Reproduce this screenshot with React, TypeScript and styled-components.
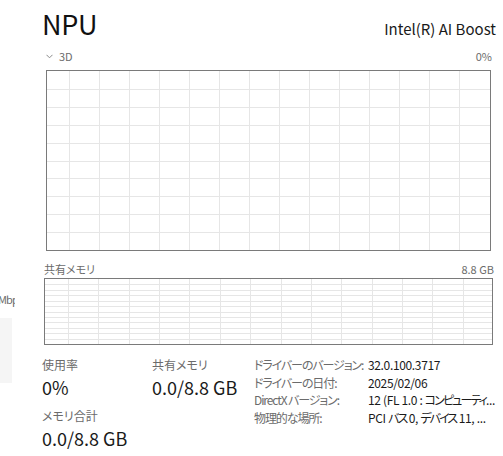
import styled, { createGlobalStyle } from "styled-components";

const GlobalStyle = createGlobalStyle`
  html, body {
    margin: 0;
    padding: 0;
    background: #ffffff;
  }
  body {
    font-family: "Noto Sans CJK JP", "Noto Sans", sans-serif;
    font-feature-settings: "palt";
    color: #1a1a1a;
  }
`;

type GridProps = {
  width: number;
  height: number;
  rows: number;
  colStart: number;
  colStep: number;
};

const GridLines = ({ width, height, rows, colStart, colStep }: GridProps) => {
  const cols: number[] = [];
  for (let x = colStart; x < width - 1; x += colStep) cols.push(Math.round(x) + 0.5);
  const rowLines: number[] = [];
  for (let i = 1; i < rows; i++) rowLines.push(Math.round((height / rows) * i) + 0.5);
  return (
    <svg width={width} height={height} style={{ display: "block" }}>
      {rowLines.map((y) => (
        <line key={"r" + y} x1={0} x2={width} y1={y} y2={y} stroke="#e6e6e6" strokeWidth={1} />
      ))}
      {cols.map((x) => (
        <line key={"c" + x} x1={x} x2={x} y1={0} y2={height} stroke="#e6e6e6" strokeWidth={1} />
      ))}
    </svg>
  );
};

export default function App() {
  return (
    <>
      <GlobalStyle />
      <Page>
        <Sidebar>
          <SidebarText>Mbps</SidebarText>
          <SidebarCard />
        </Sidebar>
        <Panel>
          <Header>
            <Title>NPU</Title>
            <Device>Intel(R) AI Boost</Device>
          </Header>

          <ChartHeader $inset={4} $top={7} $gap={7}>
            <ChartName>
              <svg width="7" height="5" viewBox="0 0 7 5">
                <path d="M0.5 0.8 L3.5 3.8 L6.5 0.8" fill="none" stroke="#8a8a8a" strokeWidth="1" />
              </svg>
              3D
            </ChartName>
            <ChartScale>0%</ChartScale>
          </ChartHeader>
          <Chart $inset={4} $height={181}>
            <GridLines width={443} height={179} rows={10} colStart={22} colStep={30} />
          </Chart>

          <ChartHeader $inset={2} $top={11} $gap={2}>
            <ChartName>共有メモリ</ChartName>
            <ChartScale>8.8 GB</ChartScale>
          </ChartHeader>
          <Chart $inset={2} $height={67}>
            <GridLines width={447} height={65} rows={12} colStart={23} colStep={30.36} />
          </Chart>

          <Stats>
            <StatGrid>
              <Stat>
                <StatLabel>使用率</StatLabel>
                <StatValue>0%</StatValue>
              </Stat>
              <Stat>
                <StatLabel>共有メモリ</StatLabel>
                <StatValue>0.0/8.8 GB</StatValue>
              </Stat>
              <Stat>
                <StatLabel>メモリ合計</StatLabel>
                <StatValue>0.0/8.8 GB</StatValue>
              </Stat>
            </StatGrid>
            <Details>
              <DetailLabel>ドライバーのバージョン:</DetailLabel>
              <DetailValue>32.0.100.3717</DetailValue>
              <DetailLabel>ドライバーの日付:</DetailLabel>
              <DetailValue>2025/02/06</DetailValue>
              <DetailLabel>DirectX バージョン:</DetailLabel>
              <DetailValue>
                12 (FL 1.0 : <Kana>コンピューティ</Kana>...
              </DetailValue>
              <DetailLabel>物理的な場所:</DetailLabel>
              <DetailValue>
                PCI <Kana>バス</Kana> 0, <Kana>デバイス</Kana> 11, ...
              </DetailValue>
            </Details>
          </Stats>
        </Panel>
      </Page>
    </>
  );
}

const Page = styled.div`
  display: flex;
  width: 503px;
  height: 456px;
  overflow: hidden;
`;

const Sidebar = styled.div`
  width: 15px;
  flex-shrink: 0;
  overflow: hidden;
  display: flex;
  flex-direction: column;
`;

const SidebarText = styled.div`
  margin: 291px 0 0 -2px;
  font-size: 11px;
  line-height: 16px;
  letter-spacing: -0.9px;
  color: #6b6b6b;
  white-space: nowrap;
`;

const SidebarCard = styled.div`
  margin-top: 11px;
  width: 12px;
  height: 65px;
  background: #f5f5f5;
`;

const Panel = styled.div`
  flex: 1;
  display: flex;
  flex-direction: column;
  padding: 6px 9px 0 27px;
`;

const Header = styled.div`
  display: flex;
  justify-content: space-between;
  align-items: baseline;
`;

const Title = styled.div`
  font-size: 27px;
  line-height: 36px;
  letter-spacing: -0.3px;
  color: #111111;
`;

const Device = styled.div`
  font-size: 15px;
  line-height: 20px;
  color: #1a1a1a;
  margin-right: -1px;
`;

const ChartHeader = styled.div<{ $inset: number; $top: number; $gap: number }>`
  display: flex;
  justify-content: space-between;
  align-items: center;
  margin: ${({ $top }) => $top}px ${({ $inset }) => $inset - 1}px
    ${({ $gap }) => $gap}px ${({ $inset }) => $inset}px;
  font-size: 11px;
  line-height: 14px;
  color: #6b6b6b;
`;

const ChartName = styled.div`
  display: flex;
  align-items: center;
  gap: 6px;
`;

const ChartScale = styled.div``;

const Chart = styled.div<{ $inset: number; $height: number }>`
  box-sizing: border-box;
  margin: 0 ${({ $inset }) => $inset}px;
  height: ${({ $height }) => $height}px;
  border: 1px solid #7a7a7a;
  overflow: hidden;
`;

const Stats = styled.div`
  display: flex;
  margin-top: 11px;
`;

const StatGrid = styled.div`
  display: grid;
  grid-template-columns: 110px 102px;
  row-gap: 6px;
  width: 212px;
  align-content: start;
`;

const Stat = styled.div`
  display: flex;
  flex-direction: column;
`;

const StatLabel = styled.div`
  font-size: 12px;
  line-height: 17px;
  color: #6b6b6b;
`;

const StatValue = styled.div`
  font-size: 18px;
  line-height: 28px;
  color: #1a1a1a;
  white-space: nowrap;
`;

const Details = styled.div`
  display: grid;
  grid-template-columns: 114px 1fr;
  grid-auto-rows: 17.7px;
  align-content: start;
  font-size: 12px;
  line-height: 17.7px;
  min-width: 0;
`;

const DetailLabel = styled.div`
  color: #6b6b6b;
  white-space: nowrap;
  letter-spacing: -1.1px;
`;

const DetailValue = styled.div`
  color: #1a1a1a;
  white-space: nowrap;
  overflow: hidden;
  letter-spacing: -0.35px;
`;

const Kana = styled.span`
  letter-spacing: -1.9px;
`;
